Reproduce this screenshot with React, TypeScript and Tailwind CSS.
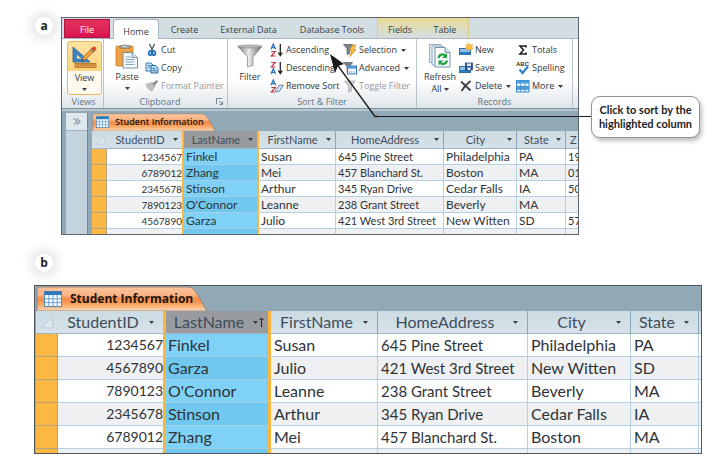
import React from "react";

type Row = string[];

const HEADERS = ["StudentID", "LastName", "FirstName", "HomeAddress", "City", "State"];

const UNSORTED: Row[] = [
  ["1234567", "Finkel", "Susan", "645 Pine Street", "Philadelphia", "PA", "19"],
  ["6789012", "Zhang", "Mei", "457 Blanchard St.", "Boston", "MA", "01"],
  ["2345678", "Stinson", "Arthur", "345 Ryan Drive", "Cedar Falls", "IA", "50"],
  ["7890123", "O'Connor", "Leanne", "238 Grant Street", "Beverly", "MA", ""],
  ["4567890", "Garza", "Julio", "421 West 3rd Street", "New Witten", "SD", "57"],
];

const SORTED: Row[] = [
  ["1234567", "Finkel", "Susan", "645 Pine Street", "Philadelphia", "PA", ""],
  ["4567890", "Garza", "Julio", "421 West 3rd Street", "New Witten", "SD", ""],
  ["7890123", "O'Connor", "Leanne", "238 Grant Street", "Beverly", "MA", ""],
  ["2345678", "Stinson", "Arthur", "345 Ryan Drive", "Cedar Falls", "IA", ""],
  ["6789012", "Zhang", "Mei", "457 Blanchard St.", "Boston", "MA", ""],
];

function Caret({ className = "" }: { className?: string }) {
  return (
    <svg viewBox="0 0 5 3" className={`h-[3px] w-[5px] shrink-0 ${className}`} aria-hidden="true">
      <path d="M0 0h5L2.500 3z" fill="#3a4046" />
    </svg>
  );
}

function Badge({ children }: { children: string }) {
  return (
    <span className="flex size-[18px] items-center justify-center rounded-full bg-white font-['Open_Sans',sans-serif] text-[12px] leading-none font-bold text-[#222] shadow-[0_0_12px_4px_rgba(0,0,0,0.12)]">
      {children}
    </span>
  );
}

/* ---------- ribbon icons ---------- */

function ViewIcon() {
  return (
    <svg viewBox="0 0 26 24" className="h-6 w-[26px]" aria-hidden="true">
      <path d="M1 2v15h17z" fill="#3c86c8" stroke="#22619f" strokeWidth=".8" />
      <path d="M4.500 9v5h6z" fill="#fbe3a8" stroke="#22619f" strokeWidth=".6" />
      <rect x="3" y="18.500" width="21" height="4" fill="#e2a04a" stroke="#a8641f" strokeWidth=".7" />
      <path d="M6 19v2M9 19v2M12 19v2M15 19v2M18 19v2M21 19v2" stroke="#8c531b" strokeWidth=".7" />
      <path d="M10 16l1.500-4L20 3l3 2.500L14 14z" fill="#f2a63c" stroke="#9b5a1b" strokeWidth=".7" />
      <path d="M19 4l2-2.200q1.500-.8 2.700.5t.2 2.300L22 7z" fill="#d8472f" />
      <path d="M18 5l3.200 2.800 1-1.200L19 3.900z" fill="#6f9c76" />
      <path d="M9.800 16.200l.8-2.200 1.400 1.300z" fill="#333" />
    </svg>
  );
}

function PasteIcon() {
  return (
    <svg viewBox="0 0 24 26" className="h-[26px] w-6" aria-hidden="true">
      <rect x="1" y="3" width="17" height="20" rx="1" fill="#efa041" stroke="#c97f2d" strokeWidth=".8" />
      <path d="M5 5V3h3q1.500-3 3 0h4v2z" fill="#d8dcdf" stroke="#5d666d" strokeWidth=".9" />
      <path d="M8 9.500h9l5.500 5V25H8z" fill="#f6f9fc" stroke="#66819d" strokeWidth=".9" />
      <path d="M17 9.500v5h5.500" fill="#d5e2ee" stroke="#66819d" strokeWidth=".8" />
      <path d="M10.500 14h5M10.500 16.500h9M10.500 19h9M10.500 21.500h9" stroke="#8aa5bf" />
    </svg>
  );
}

function CutIcon() {
  return (
    <svg viewBox="0 0 14 14" className="size-3.5" aria-hidden="true">
      <path d="M4.500 1l3.500 7.500M9.500 1L6 8.500" stroke="#4a647f" strokeWidth="1.500" />
      <path d="M6.300 8Q3.600 7.500 3.600 10.300t2.600 1.500.1-3.800zM7.700 8Q10.400 7.500 10.400 10.300t-2.600 1.500-.1-3.800z" fill="#cfe3f5" stroke="#1f6cb4" strokeWidth="1.700" />
    </svg>
  );
}

function CopyIcon() {
  return (
    <svg viewBox="0 0 14 14" className="size-3.5" aria-hidden="true">
      <path d="M1 2h5l2 2v6H1z" fill="#c6e0f5" stroke="#3c7fb9" />
      <path d="M2.500 4.500h3M2.500 6.500h3" stroke="#3c7fb9" strokeWidth=".8" />
      <path d="M6 4.500h4.500L13 7v5H6z" fill="#b4d6f1" stroke="#2a6aa5" />
      <path d="M7.500 7.500H10M7.500 9.700h4" stroke="#2a6aa5" strokeWidth=".9" />
    </svg>
  );
}

function PainterIcon() {
  return (
    <svg viewBox="0 0 14 14" className="size-3.5" aria-hidden="true">
      <path d="M1 5.500l6-2 3 3.500-3 5q-4-1-6-6.500z" fill="#bfc1c3" stroke="#a3a6a8" strokeWidth=".7" />
      <path d="M7 4.500L12 1l1.200 1.300L9.500 7z" fill="#8d9092" />
    </svg>
  );
}

function FunnelIcon() {
  return (
    <svg viewBox="0 0 26 24" className="h-6 w-[26px]" aria-hidden="true">
      <defs>
        <linearGradient id="funnel" x1="0" x2="1">
          <stop offset="0" stopColor="#777b7e" />
          <stop offset=".45" stopColor="#e9ebec" />
          <stop offset="1" stopColor="#63676a" />
        </linearGradient>
      </defs>
      <path d="M1 2.500h24L16 13v8.500l-5.500 1.500V13z" fill="url(#funnel)" stroke="#6c7073" strokeWidth=".6" />
      <ellipse cx="13" cy="2.500" rx="12" ry="1.500" fill="#b9bcbe" stroke="#74787b" strokeWidth=".6" />
    </svg>
  );
}

function SortIcon({ kind }: { kind: "asc" | "desc" | "clear" }) {
  const flipped = kind === "desc";
  return (
    <svg viewBox="0 0 14 14" className="size-3.5" aria-hidden="true">
      <path
        d={flipped ? "M1 13l2.300-5.500L5.600 13M1.800 11.300h3" : "M1 6.300L3.300 1l2.300 5.300M1.800 4.700h3"}
        fill="none"
        stroke="#2a6db5"
        strokeWidth="1.200"
      />
      <path
        d={flipped ? "M1.300 1.500h4L1.300 6h4.200" : "M1.300 8.500h4L1.300 13h4.200"}
        fill="none"
        stroke="#c03a4c"
        strokeWidth="1.200"
      />
      {kind === "clear" ? (
        <path d="M5.500 11.500L9.500 6l3.800.3-3.800 5.900-3.300.6z" fill="#d3e2f1" stroke="#4c78a6" strokeWidth=".9" />
      ) : (
        <path d="M10.300 1v11M8.300 9.500l2 3 2-3" fill="none" stroke="#222" strokeWidth="1.300" />
      )}
    </svg>
  );
}

function SmallFunnel({ kind }: { kind: "selection" | "advanced" | "toggle" }) {
  const off = kind === "toggle";
  return (
    <svg viewBox="0 0 14 14" className="size-3.5" aria-hidden="true">
      <path
        d={off ? "M1.500 2h11L8.500 7v5L5.500 13V7z" : "M.5 1.500h9L6.500 5.500v5L4 11.500v-6z"}
        fill={off ? "#cdd0d2" : "#7d8387"}
        stroke={off ? "#a5a8aa" : "#54595d"}
        strokeWidth=".7"
      />
      {kind === "selection" && (
        <path d="M9.500 2L6.500 8h2.300l-2 5.500L13 6.500h-2.500L13 2z" fill="#fbc23a" stroke="#c77a16" strokeWidth=".7" />
      )}
      {kind === "advanced" && (
        <g>
          <rect x="4.500" y="5" width="9" height="8" fill="#f2f8fd" stroke="#2f78bd" />
          <path d="M4.500 5.500h9v2h-9z" fill="#3d8dd2" />
          <path d="M6 11h1M8.200 11h1M10.400 11h1" stroke="#2f78bd" />
        </g>
      )}
    </svg>
  );
}

function RefreshIcon() {
  return (
    <svg viewBox="0 0 24 26" className="h-[26px] w-6" aria-hidden="true">
      <path d="M1.500 1.500h11v18h-11z" fill="#dfeaf3" stroke="#7f9db8" strokeWidth=".8" />
      <path d="M4 3h11v19H4z" fill="#eaf2f8" stroke="#7f9db8" strokeWidth=".8" />
      <path d="M7 4.500h10l5 5V24H7z" fill="#fafcfe" stroke="#6687a4" strokeWidth=".9" />
      <path d="M17 4.500v5h5" fill="#d3e1ed" stroke="#6687a4" strokeWidth=".8" />
      <path d="M10.500 15q1-4 5-3.500l1.800 1" fill="none" stroke="#25a043" strokeWidth="2.200" />
      <path d="M19 10v5h-5z" fill="#25a043" />
      <path d="M19 17.500q-1 4-5 3.500l-1.800-1" fill="none" stroke="#25a043" strokeWidth="2.200" />
      <path d="M10.500 22.500v-5h5z" fill="#25a043" />
    </svg>
  );
}

function RecordIcon({ save = false }: { save?: boolean }) {
  return (
    <svg viewBox="0 0 14 14" className="size-3.5" aria-hidden="true">
      <rect x=".5" y="5.500" width="11" height="6" fill="#8fc1e8" stroke="#2f6fab" />
      <path d="M1 9h10v2H1z" fill="#2c7cc4" />
      {save ? (
        <g>
          <rect x="6.500" y="2" width="7" height="7" fill="#31549b" stroke="#1f3a75" strokeWidth=".7" />
          <path d="M8 2.500h4V5H8zM8.500 6.500h3V9h-3z" fill="#e6edf8" />
        </g>
      ) : (
        <path d="M10 0l1 2.200L13.500 1.500 13 4l1 2-2.500.3L10 8 8.700 6 6 5.500 7.500 3.500 7 1.500l2.200.6z" fill="#fbc44a" stroke="#dd9325" strokeWidth=".5" />
      )}
    </svg>
  );
}

function DeleteIcon() {
  return (
    <svg viewBox="0 0 14 14" className="size-3.5" aria-hidden="true">
      <path d="M2 2.500l9.500 9M11.500 2Q6 6 2.500 12" fill="none" stroke="#3c4146" strokeWidth="1.900" />
    </svg>
  );
}

function SigmaIcon() {
  return (
    <svg viewBox="0 0 14 14" className="size-3.5" aria-hidden="true">
      <path d="M10 4.500V3H4l3.500 4L4 11h6V9.500" fill="none" stroke="#1e1e1e" strokeWidth="1.600" />
    </svg>
  );
}

function SpellingIcon() {
  return (
    <svg viewBox="0 0 14 14" className="size-3.5" aria-hidden="true">
      <text x="0" y="5" fontSize="6" fontWeight="700" fontFamily="Liberation Sans, sans-serif" fill="#333">
        ABC
      </text>
      <path d="M3.500 8.500L6.500 12 12 5.500" fill="none" stroke="#2c7fd0" strokeWidth="2.200" />
    </svg>
  );
}

function MoreIcon() {
  return (
    <svg viewBox="0 0 14 14" className="size-3.5" aria-hidden="true">
      <rect x=".5" y="1.500" width="12.500" height="11.500" fill="#eaf5fd" stroke="#3b85c4" />
      <path d="M.5 1.500H13v3H.5zM.5 7.500H13v2.800H.5z" fill="#48a0e0" />
      <path d="M4.700 4.500V13M8.900 4.500V13M.5 7.500H13M.5 10.300H13" stroke="#3b85c4" strokeWidth=".8" />
    </svg>
  );
}

function DatasheetIcon({ className }: { className: string }) {
  return (
    <svg viewBox="0 0 18 16" className={className} aria-hidden="true">
      <rect x=".5" y=".5" width="17" height="15" fill="#f4faff" stroke="#4d87b8" />
      <path d="M.5.5h17v3.500H.5z" fill="#2e79bb" />
      <path d="M.5 7.800h17M.5 11.600h17M4.800 4v11.500M9 4v11.500M13.200 4v11.500" stroke="#6ba3cf" />
    </svg>
  );
}

/* ---------- ribbon ---------- */

function RibbonItem({
  icon,
  label,
  menu = false,
  disabled = false,
}: {
  icon: React.ReactNode;
  label: string;
  menu?: boolean;
  disabled?: boolean;
}) {
  return (
    <button
      type="button"
      disabled={disabled}
      className="flex h-[18px] items-center gap-0.5 whitespace-nowrap text-[#303942] disabled:text-[#959a9f]"
    >
      {icon}
      {label}
      {menu && <Caret className="ml-0.5" />}
    </button>
  );
}

function Group({ label, className, launcher = false, children }: { label: string; className: string; launcher?: boolean; children: React.ReactNode }) {
  return (
    <section aria-label={label} className={`flex shrink-0 flex-col border-r border-[#b9c3cb] ${className}`}>
      <div className="flex h-14 items-start">{children}</div>
      <div className="flex h-[14px] items-center justify-center text-[#5f7382]">
        <span className="flex-1 text-center">{label}</span>
        {launcher && (
          <svg viewBox="0 0 7 7" className="mr-1 size-[7px]" aria-hidden="true">
            <path d="M.5 6V.5H6M3 3l3 3M6.500 3.500v3h-3" fill="none" stroke="#74838f" />
          </svg>
        )}
      </div>
    </section>
  );
}

function Ribbon() {
  const tab = "flex h-5 items-center justify-center pt-1";
  return (
    <div className="font-['Open_Sans',sans-serif] text-[9px] leading-3 font-medium">
      <div role="tablist" className="flex h-[21px] items-end border-b border-[#a9b6c0] bg-[#d3dee3] pl-0.5 text-[#36424d]">
        <button type="button" role="tab" className="mr-[3px] flex h-[19px] w-[46px] items-center justify-center border border-[#b01440] bg-linear-to-b from-[#e0325f] to-[#dc1250] pt-0.5 text-white">
          File
        </button>
        <button type="button" role="tab" aria-selected="true" className={`${tab} -mb-px w-[46px] rounded-t-[3px] border border-b-0 border-[#a9b6c0] bg-white`}>
          Home
        </button>
        <button type="button" role="tab" className={`${tab} w-[51px]`}>Create</button>
        <button type="button" role="tab" className={`${tab} w-[77px]`}>External Data</button>
        <button type="button" role="tab" className={`${tab} w-[90px]`}>Database Tools</button>
        <div className="flex border-x border-[#dcc98a] bg-linear-to-b from-[#e9da91] to-[#d3dee3]">
          <button type="button" role="tab" className={`${tab} w-[44px]`}>Fields</button>
          <button type="button" role="tab" className={`${tab} w-[46px]`}>Table</button>
        </div>
      </div>

      <div className="flex h-[70px] border-b border-[#7f919e] bg-linear-to-b from-white from-60% to-[#dfe5ea] pl-0.5">
        <Group label="Views" className="w-10">
          <button type="button" className="mt-0.5 ml-[3px] flex h-[54px] w-[35px] flex-col items-center rounded-[3px] border border-[#eab55c] bg-linear-to-b from-[#fde3a3] from-0% via-[#fbd57f] via-55% to-[#fffaf0] to-56% text-[#303942]">
            <span className="flex h-[30px] items-center"><ViewIcon /></span>
            View
            <Caret className="mt-1" />
          </button>
        </Group>
        <Group label="Clipboard" className="w-[124px]" launcher>
          <button type="button" className="mr-1 ml-[9px] flex w-[28px] flex-col items-center pt-0.5 text-[#303942]">
            <span className="flex h-[30px] items-center"><PasteIcon /></span>
            Paste
            <Caret className="mt-1" />
          </button>
          <div className="flex flex-col pt-0.5">
            <RibbonItem icon={<CutIcon />} label="Cut" />
            <RibbonItem icon={<CopyIcon />} label="Copy" />
            <RibbonItem icon={<PainterIcon />} label="Format Painter" disabled />
          </div>
        </Group>
        <Group label="Sort & Filter" className="w-[189px]">
          <button type="button" className="mr-1 ml-[6px] flex w-8 flex-col items-center pt-0.5 text-[#303942]">
            <span className="flex h-[30px] items-center"><FunnelIcon /></span>
            Filter
          </button>
          <div className="flex w-[73px] flex-col pt-0.5">
            <RibbonItem icon={<SortIcon kind="asc" />} label="Ascending" />
            <RibbonItem icon={<SortIcon kind="desc" />} label="Descending" />
            <RibbonItem icon={<SortIcon kind="clear" />} label="Remove Sort" />
          </div>
          <div className="flex flex-col pt-0.5">
            <RibbonItem icon={<SmallFunnel kind="selection" />} label="Selection" menu />
            <RibbonItem icon={<SmallFunnel kind="advanced" />} label="Advanced" menu />
            <RibbonItem icon={<SmallFunnel kind="toggle" />} label="Toggle Filter" disabled />
          </div>
        </Group>
        <Group label="Records" className="w-[156px]">
          <button type="button" className="ml-1 flex w-[38px] flex-col items-center pt-0.5 text-[#303942]">
            <span className="flex h-[30px] items-center"><RefreshIcon /></span>
            Refresh
            <span className="flex items-center gap-0.5">All <Caret /></span>
          </button>
          <div className="flex w-[57px] flex-col pt-0.5">
            <RibbonItem icon={<RecordIcon />} label="New" />
            <RibbonItem icon={<RecordIcon save />} label="Save" />
            <RibbonItem icon={<DeleteIcon />} label="Delete" menu />
          </div>
          <div className="flex flex-col pt-0.5">
            <RibbonItem icon={<SigmaIcon />} label="Totals" />
            <RibbonItem icon={<SpellingIcon />} label="Spelling" />
            <RibbonItem icon={<MoreIcon />} label="More" menu />
          </div>
        </Group>
      </div>
    </div>
  );
}

/* ---------- datasheet ---------- */

function ObjectTab({ large = false }: { large?: boolean }) {
  return (
    <div className={`relative flex items-center ${large ? "h-[25px] w-[172px] gap-2 pl-2" : "h-[18px] w-[124px] gap-1.5 pl-1"}`}>
      <svg viewBox="0 0 172 25" preserveAspectRatio="none" className="absolute inset-0 size-full" aria-hidden="true">
        <defs>
          <linearGradient id={large ? "tabLarge" : "tabSmall"} x1="0" y1="0" x2="0" y2="1">
            <stop offset="0" stopColor="#fbc59c" />
            <stop offset=".35" stopColor="#f9b283" />
            <stop offset=".5" stopColor="#f48a45" />
            <stop offset=".75" stopColor="#fba867" />
            <stop offset="1" stopColor="#f7d9bd" />
          </linearGradient>
        </defs>
        <path d="M1 25V4q0-3 3-3h147q6 0 9 5l8 14q2 5 4 5z" fill={large ? "url(#tabLarge)" : "url(#tabSmall)"} stroke="#8d7a6d" strokeWidth=".8" />
      </svg>
      <DatasheetIcon className={large ? "relative h-4 w-[18px]" : "relative h-3 w-[13px]"} />
      <span className={`relative font-['Open_Sans',sans-serif] whitespace-nowrap text-[#20160f] ${large ? "text-[12px] font-bold" : "text-[9px] font-semibold"}`}>
        Student Information
      </span>
    </div>
  );
}

function Datasheet({ rows, large = false, sorted = false }: { rows: Row[]; large?: boolean; sorted?: boolean }) {
  const widths = large
    ? ["w-[22px]", "w-[105px]", "w-[108px]", "w-[107px]", "w-[150px]", "w-[103px]", "w-[68px]"]
    : ["w-[15px]", "w-[75px]", "w-[77px]", "w-[77px]", "w-[108px]", "w-[73px]", "w-[49px]"];
  const rowHeight = large ? "h-[23px]" : "h-4";
  const headHeight = large ? "h-[23px]" : "h-[18px]";
  const orange = large ? "border-x-[3px] border-x-[#fcb539]" : "border-x-2 border-x-[#fcb539]";
  const idSize = large ? "text-[14px]" : "text-[10px]";
  const addressSize = large ? "text-[15px]" : "text-[11px]";
  return (
    <table
      aria-label="Student Information"
      className={`w-full table-fixed border-separate border-spacing-0 font-['Lato',sans-serif] whitespace-nowrap text-[#2e3338] ${large ? "text-[16px] leading-5" : "text-[12px] leading-[14px]"}`}
    >
      <colgroup>
        {widths.map((w, i) => <col key={i} className={w} />)}
        <col />
      </colgroup>
      <thead>
        <tr className="bg-linear-to-b from-[#ccdae2] to-[#d6e3ea]">
          <th className={`${headHeight} border-b border-[#9db4c4] p-0 align-middle`}>
            <svg viewBox="0 0 12 12" className={large ? "mx-auto size-3.5" : "mx-auto size-2.5"} aria-label="Select all">
              <path d="M1 11L11 1v10z" fill="#dde8ee" stroke="#b5c5d0" strokeWidth=".8" />
            </svg>
          </th>
          {HEADERS.map((h, i) => (
            <th
              key={h}
              scope="col"
              aria-sort={sorted && i === 1 ? "ascending" : undefined}
              className={`border-b border-b-[#9db4c4] p-0 font-normal ${i === 1 ? `${orange} bg-[#989b9f]` : i === 0 ? "" : "border-r border-r-[#8fa5b5]"}`}
            >
              <button type="button" className={`flex w-full items-center text-[#3d4d5a] ${large ? "pr-2" : "pr-1 text-[11px]"}`}>
                <span className="flex-1 text-center">{h}</span>
                <Caret className={large ? "h-1 w-[7px]" : ""} />
                {sorted && i === 1 && (
                  <svg viewBox="0 0 5 10" className="-mr-1 h-2.5 w-[5px]" aria-hidden="true">
                    <path d="M2.500 10V1M.5 3l2-2 2 2" fill="none" stroke="#222" />
                  </svg>
                )}
              </button>
            </th>
          ))}
          <th className={`overflow-hidden border-b border-[#9db4c4] p-0 text-left font-normal text-[#3d4d5a] ${large ? "" : "pl-1 text-[11px]"}`}>{large ? "" : "Z"}</th>
        </tr>
      </thead>
      <tbody>
        {rows.map((row, r) => (
          <tr key={row[0]} className={r % 2 ? "bg-[#eff0f1]" : "bg-white"}>
            <td className={`${rowHeight} border-r border-b border-[#b3a27c] bg-[#fcb843] p-0`} />
            {row.map((cell, c) => (
              <td
                key={c}
                className={`overflow-hidden border-b p-0 ${
                  c === 1
                    ? `${orange} border-b-[#a5cde6] ${r % 2 ? "bg-[#70c8ef]" : "bg-[#7fd1f6]"}`
                    : c === 0
                      ? "border-b-[#b5cfe3] text-right"
                      : c === 6
                        ? "border-b-[#b5cfe3]"
                        : "border-r border-r-[#b5cfe3] border-b-[#b5cfe3]"
                } ${c === 0 ? idSize : c === 3 || c === 6 ? addressSize : ""} ${c === 0 ? "" : c === 1 ? "pl-0.5" : large ? "pl-[3px]" : "pl-0.5"}`}
              >
                {cell}
              </td>
            ))}
          </tr>
        ))}
        <tr className="bg-[#eff0f1]">
          <td className={`${large ? "h-1" : "h-[5px]"} border-r border-[#b3a27c] bg-[#fcb843] p-0`} />
          {HEADERS.map((h, c) => (
            <td key={h} className={`p-0 ${c === 1 ? `${orange} bg-[#70c8ef]` : c === 0 ? "" : "border-r border-[#b5cfe3]"}`} />
          ))}
          <td className="p-0" />
        </tr>
      </tbody>
    </table>
  );
}

export default function App() {
  return (
    <main className="bg-white pt-[17px] pb-4">
      <section className="relative flex" aria-label="Figure a">
        <div className="w-[61px] shrink-0 pl-[35px]">
          <Badge>a</Badge>
        </div>

        <div className="min-w-0 flex-1 overflow-hidden border border-[#60666b] bg-[#91a9b6]">
          <Ribbon />
          <div className="border-t-2 border-[#b9c7d0]">
            <div className="flex pt-0.5 pl-1">
              <nav aria-label="Navigation Pane" className="mr-1 w-[22px] shrink-0 border-r border-[#71889a] bg-[#c3d4de]">
                <button type="button" aria-label="Open navigation pane" className="flex h-[18px] w-full items-center justify-center border-b border-[#9fb2c0] bg-[#dde7ed]">
                  <svg viewBox="0 0 8 7" className="h-[7px] w-2" aria-hidden="true">
                    <path d="M1 .5l3 3-3 3M4 .5l3 3-3 3" fill="none" stroke="#34495c" strokeWidth=".9" />
                  </svg>
                </button>
              </nav>
              <div className="min-w-0 flex-1">
                <ObjectTab />
                <Datasheet rows={UNSORTED} />
              </div>
            </div>
          </div>
        </div>

        <div className="w-[142px] shrink-0 pt-[79px] pl-3">
          <p className="w-[109px] rounded-[9px] border border-[#8f9396] bg-white py-1.5 text-center font-['Lato',sans-serif] text-[11px] leading-[14px] font-bold text-[#222] shadow-[2px_3px_4px_rgba(0,0,0,0.25)]">
            Click to sort by the
            <br />
            highlighted column
          </p>
        </div>

        <svg viewBox="0 0 50 65" className="pointer-events-none absolute top-[36px] left-[328px] h-[65px] w-[50px]" aria-hidden="true">
          <path d="M8 10l39 53.500h3" fill="none" stroke="#1c1c1c" strokeWidth="1.300" />
          <path d="M2 1l14 10-6 2-3 7z" fill="#1c1c1c" />
        </svg>
        <span className="pointer-events-none absolute top-[99px] right-[130px] left-[375px] h-px bg-[#1c1c1c]" />
      </section>

      <section className="pt-[19px]" aria-label="Figure b">
        <div className="pl-[35px]">
          <Badge>b</Badge>
        </div>
        <div className="mt-[13px] mr-[19px] ml-[34px] overflow-hidden border border-[#4f565c] bg-[#91a9b6] pl-px">
          <ObjectTab large />
          <Datasheet rows={SORTED} large sorted />
        </div>
      </section>
    </main>
  );
}
